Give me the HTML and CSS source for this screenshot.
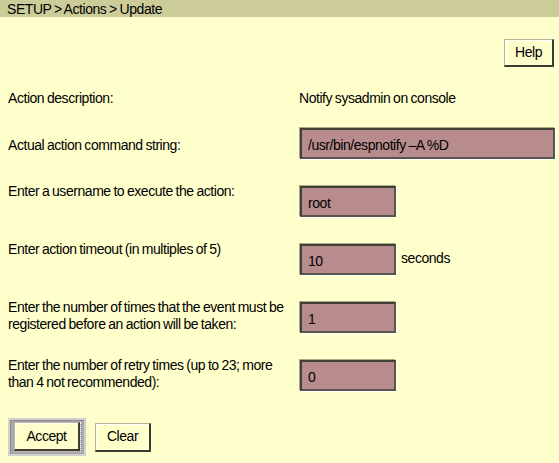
FILE: index.html
```html
<!DOCTYPE html>
<html>
<head>
<meta charset="utf-8">
<link rel="stylesheet" href="styles.css">
</head>
<body>
<div class="crumb">SETUP &gt; Actions &gt; Update</div>
<div class="toolbar"><button class="btn help">Help</button></div>
<div class="form">
  <div class="row desc">
    <div class="label">Action description:</div>
    <div class="value">Notify sysadmin on console</div>
  </div>
  <div class="row cmd">
    <div class="label">Actual action command string:</div>
    <div class="field"><input class="box wide" value="/usr/bin/espnotify –A %D"></div>
  </div>
  <div class="row">
    <div class="label">Enter a username to execute the action:</div>
    <div class="field"><input class="box" value="root"></div>
  </div>
  <div class="row">
    <div class="label">Enter action timeout (in multiples of 5)</div>
    <div class="field"><input class="box" value="10"><span class="unit">seconds</span></div>
  </div>
  <div class="row">
    <div class="label">Enter the number of times that the event must be registered before an action will be taken:</div>
    <div class="field"><input class="box" value="1"></div>
  </div>
  <div class="row">
    <div class="label">Enter the number of retry times (up to 23; more than 4 not recommended):</div>
    <div class="field"><input class="box" value="0"></div>
  </div>
</div>
<div class="actions">
  <div class="focus-frame"><div class="focus-inner"><button class="btn accept">Accept</button></div></div>
  <button class="btn clear">Clear</button>
</div>
</body>
</html>
```
FILE: styles.css
```css
html, body {
  margin: 0;
  padding: 0;
  background: #ffffcc;
}
body {
  width: 559px;
  height: 463px;
  overflow: hidden;
  font-family: "Liberation Sans", Arial, sans-serif;
  font-size: 14px;
  line-height: 17px;
  letter-spacing: -0.45px;
  word-spacing: -0.7px;
  color: #000;
}
.crumb {
  height: 17px;
  line-height: 17px;
  background: #cccc99;
  padding-left: 7px;
  padding-top: 1px;
  box-sizing: border-box;
}
.toolbar {
  display: flex;
  justify-content: flex-end;
  padding: 22px 5px 0 0;
}
.btn {
  font: inherit;
  letter-spacing: inherit;
  word-spacing: inherit;
  color: #000;
  background: #ffffcc;
  height: 29px;
  padding: 0;
  margin: 0;
  box-sizing: border-box;
  border-style: solid;
  border-width: 1px 2px 2px 1px;
  border-color: #b4b49a #3c3c34 #3c3c34 #b4b49a;
  box-shadow: inset 1px 1px 0 #ffffff;
  cursor: default;
}
.help {
  width: 50px;
  height: 28px;
}
.form {
  padding-left: 8px;
}
.row {
  display: grid;
  grid-template-columns: 291px 1fr;
  align-items: start;
  margin-top: 26px;
}
.row .label {
  margin-top: -2px;
}
.row.desc {
  margin-top: 23px;
}
.row.desc .label {
  margin-top: 0;
}
.row.cmd {
  margin-top: 20px;
}
.row.cmd .label {
  margin-top: 0;
  padding-top: 10px;
}
.field {
  display: flex;
  align-items: center;
}
.box {
  font: inherit;
  letter-spacing: inherit;
  word-spacing: inherit;
  color: #000;
  width: 96px;
  height: 31px;
  box-sizing: border-box;
  margin: 1px 0 0 1px;
  padding: 3px 7px 0 6px;
  background: #b88c8c;
  border-style: solid;
  border-width: 2px;
  border-color: #404036 #56564a #56564a #404036;
  box-shadow: -1px -1px 0 #a8a884, 1px 1px 0 #ffffff;
  outline: none;
}
.box.wide {
  width: 255px;
}
.unit {
  margin-left: 5px;
  padding-bottom: 2px;
}
.actions {
  display: flex;
  align-items: center;
  padding-left: 8px;
  margin-top: 27px;
}
.focus-frame {
  border: 2px solid #d0d0d0;
  background: #a8a8a8;
  box-shadow: inset 1px 1px 0 #8a8a8a;
  padding: 2px 3px 2px 4px;
}
.focus-inner {
  display: flex;
  border-right: 1px dotted #ffffff;
  border-bottom: 1px dotted #e8b8b8;
}
.accept {
  width: 66px;
}
.clear {
  width: 56px;
  margin-left: 9px;
}
```
